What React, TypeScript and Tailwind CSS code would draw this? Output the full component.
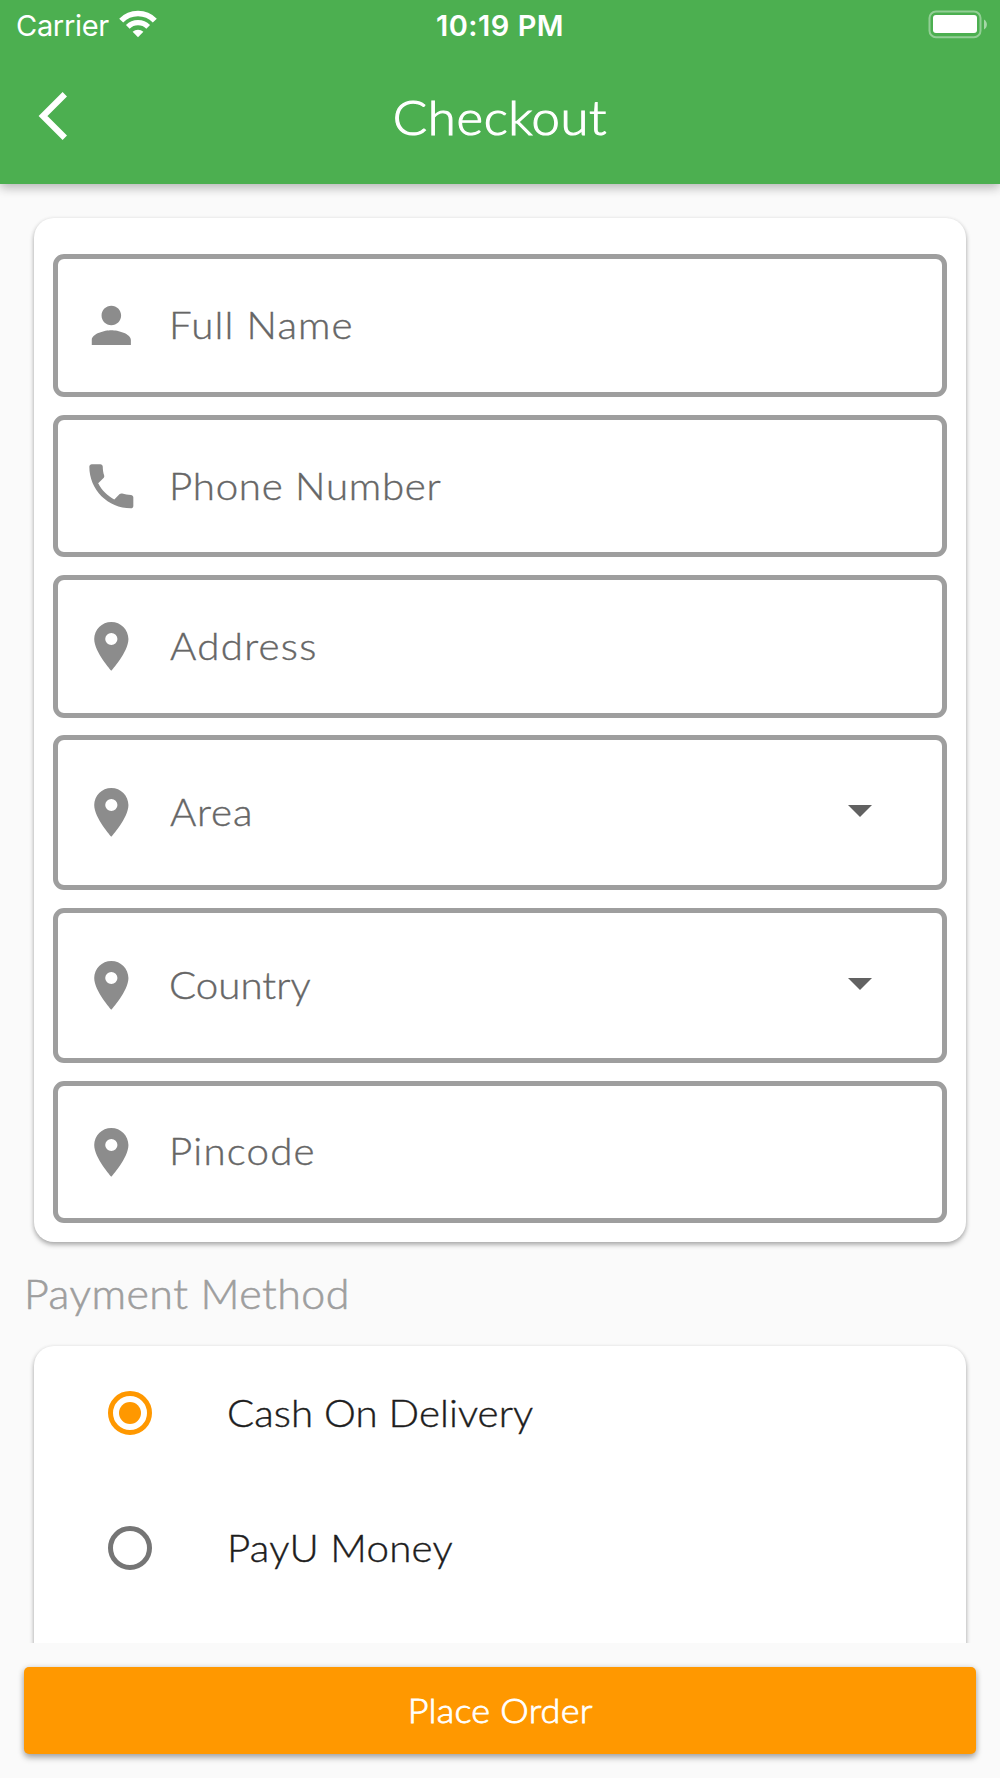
import { useState } from 'react';
import clsx from 'clsx';
import { MdPerson, MdPhone, MdLocationOn } from 'react-icons/md';
import type { IconType } from 'react-icons';

interface Field {
  label: string;
  icon: IconType;
  textClass: string;
  dropdown?: boolean;
}

const fields: Field[] = [
  { label: 'Full Name', icon: MdPerson, textClass: 'ml-[28.5px] tracking-[1.05px]' },
  { label: 'Phone Number', icon: MdPhone, textClass: 'ml-[28.5px] tracking-[0.68px]' },
  { label: 'Address', icon: MdLocationOn, textClass: 'ml-[29.5px] tracking-[1.2px]' },
  { label: 'Area', icon: MdLocationOn, textClass: 'ml-[29.5px] tracking-[0.8px]', dropdown: true },
  { label: 'Country', icon: MdLocationOn, textClass: 'ml-[28.5px] tracking-[0px]', dropdown: true },
  { label: 'Pincode', icon: MdLocationOn, textClass: 'ml-[28.5px] tracking-[1.1px]' },
];

const paymentMethods = [
  { id: 'cod', label: 'Cash On Delivery', textClass: 'tracking-[0.02px]' },
  { id: 'payu', label: 'PayU Money', textClass: 'tracking-[0.25px]' },
];

function StatusBar() {
  return (
    <div className="grid h-[53px] grid-cols-3 items-start pt-[7px] pr-[13px] pl-[16px] font-['Inter',sans-serif] text-[29px] leading-[37px]">
      <div className="flex items-start gap-[10.5px]">
        <span className="font-normal tracking-[-0.3px]">Carrier</span>
        <svg className="mt-[3px] h-[28px] w-[38px]" viewBox="0 0 38 28" fill="none" stroke="currentColor">
          <path d="M2.2 10.6 A23.5 23.5 0 0 1 35.8 10.6" strokeWidth="5.6" />
          <path d="M8.8 16.8 A14.4 14.4 0 0 1 29.2 16.8" strokeWidth="5.2" />
          <path d="M13.6 21.8 A8 8 0 0 1 24.4 21.8 L19 27.2 Z" fill="currentColor" stroke="none" />
        </svg>
      </div>
      <span className="pr-[3px] text-center font-semibold tracking-[0.5px]">10:19 PM</span>
      <svg className="mt-[3px] h-[29px] w-[60px] justify-self-end" viewBox="0 0 60 29" fill="none">
        <rect x="2.5" y="1.6" width="51" height="25.6" rx="6.5" stroke="#fff" strokeOpacity="0.4" strokeWidth="2" />
        <rect x="6" y="5" width="44" height="18" rx="3" fill="#fff" />
        <path d="M57 9.5 C60.8 11.5 60.8 17.5 57 19.5 Z" fill="#fff" fillOpacity="0.5" />
      </svg>
    </div>
  );
}

function Header() {
  return (
    <header className="relative z-10 h-[183.5px] shrink-0 bg-[#4caf50] text-white shadow-[0_4px_10px_rgba(0,0,0,0.2),0_1px_12px_rgba(0,0,0,0.12)]">
      <StatusBar />
      <div className="grid h-[130px] grid-cols-[100px_1fr_100px] items-center">
        <button type="button" aria-label="Back" className="ml-[36px] w-[34px] pb-[4px]">
          <svg className="h-[52px] w-[34px]" viewBox="0 0 34 52" fill="none" stroke="currentColor">
            <path d="M28.8 4.2 L7 26 L28.8 47.8" strokeWidth="6.2" />
          </svg>
        </button>
        <h1 className="scale-x-106 pb-[2px] text-center text-[48px] leading-none font-light tracking-[0.6px] [-webkit-text-stroke:1.1px]">
          Checkout
        </h1>
      </div>
    </header>
  );
}

function FieldRow({ field }: { field: Field }) {
  const Icon = field.icon;

  return (
    <div
      className={clsx(
        'flex items-center rounded-[11px] border-5 border-[#9e9e9e] pl-[24px]',
        field.dropdown ? 'h-[155.3px]' : 'h-[142.9px]'
      )}
    >
      <Icon className="size-[58.67px] text-[#8c8c8c]" />
      <span
        className={clsx(
          'origin-left scale-x-106 pb-[3px] text-[38px] leading-none text-[#666] [-webkit-text-stroke:0.4px]',
          field.textClass
        )}
      >
        {field.label}
      </span>
      {field.dropdown && (
        <svg className="mr-[70px] mb-[3px] ml-auto h-[12px] w-[24px]" viewBox="0 0 24 12">
          <path d="M0 0 H24 L12 12 Z" fill="#616161" />
        </svg>
      )}
    </div>
  );
}

function Radio({ checked }: { checked: boolean }) {
  return (
    <span
      className={clsx(
        'flex size-[44px] items-center justify-center rounded-full border-5',
        checked ? 'border-[#ff9800]' : 'border-[#757575]'
      )}
    >
      {checked && <span className="size-[22px] rounded-full bg-[#ff9800]" />}
    </span>
  );
}

export default function App() {
  const [method, setMethod] = useState('cod');

  return (
    <div className="flex h-[1778px] w-[1000px] flex-col overflow-hidden bg-[#fafafa] font-['Lato',sans-serif] font-light">
      <Header />

      <main className="h-[1459px] shrink-0 overflow-hidden">
        <section className="mx-[34px] mt-[34px] flex h-[1024.5px] flex-col gap-[17.4px] rounded-[20px] bg-white px-[19px] pt-[36.8px] shadow-[0_3px_5px_rgba(0,0,0,0.26),0_1px_4px_rgba(0,0,0,0.12)]">
          {fields.map((field) => (
            <FieldRow key={field.label} field={field} />
          ))}
        </section>

        <h2 className="mt-[32px] ml-[24px] h-[71.5px] w-fit origin-left scale-x-106 text-[40.5px] leading-[40px] font-light tracking-[0.45px] text-[#9e9e9e] [-webkit-text-stroke:0.6px]">
          Payment Method
        </h2>

        <section className="mx-[34px] h-[400px] rounded-[20px] bg-white shadow-[0_3px_5px_rgba(0,0,0,0.26),0_1px_4px_rgba(0,0,0,0.12)]">
          {paymentMethods.map((item) => (
            <button
              key={item.id}
              type="button"
              onClick={() => setMethod(item.id)}
              className="flex h-[135px] w-full items-center gap-[74.5px] pl-[74px]"
            >
              <Radio checked={method === item.id} />
              <span
                className={clsx(
                  'origin-left scale-x-106 pb-[3px] text-[38px] leading-none text-[#1d1d1d] [-webkit-text-stroke:0.4px]',
                  item.textClass
                )}
              >
                {item.label}
              </span>
            </button>
          ))}
        </section>
      </main>

      <button
        type="button"
        className="mx-[24px] mt-[24.5px] h-[87px] shrink-0 rounded-[5px] bg-[#ff9800] pb-[2px] text-[34px] leading-none text-white shadow-[0_4px_6px_rgba(0,0,0,0.25),0_1px_6px_rgba(0,0,0,0.18)]"
      >
        <span className="inline-block scale-x-106 tracking-[0.2px] [-webkit-text-stroke:0.8px]">Place Order</span>
      </button>
    </div>
  );
}
